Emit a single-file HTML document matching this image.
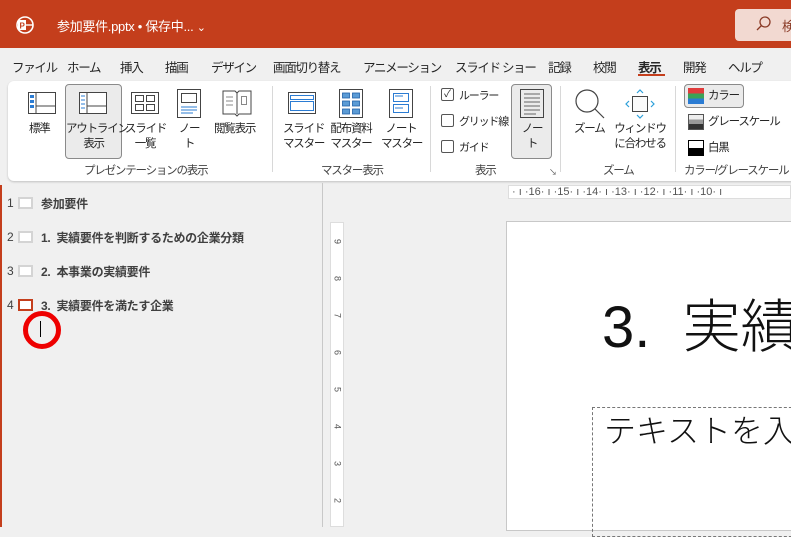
<!DOCTYPE html>
<html><head><meta charset="utf-8">
<style>
*{margin:0;padding:0;box-sizing:border-box}
body{width:791px;height:527px;overflow:hidden;background:#f0f0f0;font-family:"Liberation Sans","Noto Sans CJK JP",sans-serif;color:#262626;position:relative}
.a{position:absolute;white-space:nowrap}
.title{left:0;top:0;width:791px;height:48px;background:#c43e1c}
.tab{top:57px;font-size:12.5px;color:#262626;letter-spacing:-1.3px}
.ribbon{left:8px;top:81px;width:800px;height:100px;background:#fff;border-radius:6px;box-shadow:0 1px 2px rgba(0,0,0,.2)}
.lbl{font-size:11.5px;text-align:center;line-height:15px;color:#262626;letter-spacing:-1.2px}
.glbl{font-size:11.5px;color:#444;top:162px;letter-spacing:-1.2px}
.sep{width:1px;background:#d8d8d8;top:86px;height:86px}
.ol{font-size:12px;font-weight:bold;color:#404040;letter-spacing:-0.3px}
.num{font-size:12px;color:#404040}
.thumb{width:15px;height:12px;background:#fff;border:2px solid #d4d4d4}
</style></head><body>
<div class="a title"></div>
<svg class="a" style="left:15px;top:15px" width="20" height="20" viewBox="0 0 20 20"><circle cx="10" cy="10" r="8" fill="none" stroke="#fff" stroke-width="1.6"/><rect x="3" y="5" width="8" height="10" fill="#fff"/><text x="4.5" y="13.5" font-size="8" font-weight="bold" fill="#c43e1c" font-family="Liberation Sans">P</text><line x1="11" y1="10" x2="18" y2="10" stroke="#fff" stroke-width="1.4"/></svg>
<div class="a" style="left:57px;top:16px;font-size:13px;color:#fff;letter-spacing:-0.3px">参加要件.pptx • 保存中... <span style="font-size:11px">&#8964;</span></div>
<div class="a" style="left:735px;top:9px;width:70px;height:32px;background:#f2d9d1;border-radius:4px"></div>
<svg class="a" style="left:754px;top:15px" width="18" height="18" viewBox="0 0 18 18"><circle cx="11" cy="7" r="5" fill="none" stroke="#8a3a26" stroke-width="1.3"/><line x1="7.5" y1="10.5" x2="3" y2="15" stroke="#8a3a26" stroke-width="1.3"/></svg>
<div class="a" style="left:782px;top:16px;font-size:13px;color:#8a3a26">検</div>

<div class="a tab" style="left:12px">ファイル</div>
<div class="a tab" style="left:67px">ホーム</div>
<div class="a tab" style="left:120px">挿入</div>
<div class="a tab" style="left:165px">描画</div>
<div class="a tab" style="left:211px">デザイン</div>
<div class="a tab" style="left:273px">画面切り替え</div>
<div class="a tab" style="left:363px">アニメーション</div>
<div class="a tab" style="left:455px">スライド ショー</div>
<div class="a tab" style="left:548px">記録</div>
<div class="a tab" style="left:593px">校閲</div>
<div class="a tab" style="left:638px;font-weight:bold">表示</div>
<div class="a" style="left:638px;top:74px;width:27px;height:2px;background:#c43e1c"></div>
<div class="a tab" style="left:683px">開発</div>
<div class="a tab" style="left:728px">ヘルプ</div>

<div class="a ribbon"></div>
<svg class="a" style="left:28px;top:92px" width="28" height="22"><rect x="0.5" y="0.5" width="27" height="21" fill="#fff" stroke="#444"/><line x1="8" y1="0" x2="8" y2="22" stroke="#444"/><line x1="8" y1="14" x2="28" y2="14" stroke="#444"/><rect x="2" y="3" width="4" height="3" fill="#2b7cd3"/><rect x="2" y="8" width="4" height="3" fill="#2b7cd3"/><rect x="2" y="13" width="4" height="3" fill="#2b7cd3"/></svg>
<div class="a lbl" style="left:29px;top:122px">標準</div>
<div class="a" style="left:65px;top:84px;width:57px;height:75px;background:#ebebeb;border:1px solid #8a8a8a;border-radius:4px"></div>
<svg class="a" style="left:79px;top:92px" width="28" height="22"><rect x="0.5" y="0.5" width="27" height="21" fill="#fff" stroke="#444"/><line x1="8" y1="0" x2="8" y2="22" stroke="#444"/><line x1="8" y1="14" x2="28" y2="14" stroke="#444"/><g stroke="#2b7cd3"><line x1="2" y1="4" x2="6" y2="4"/><line x1="2" y1="8" x2="6" y2="8"/><line x1="2" y1="12" x2="6" y2="12"/><line x1="2" y1="16" x2="6" y2="16"/></g></svg>
<div class="a lbl" style="left:66px;top:122px;width:55px">アウトライン<br>表示</div>
<svg class="a" style="left:131px;top:92px" width="28" height="22" fill="none" stroke="#444"><rect x="0.5" y="0.5" width="27" height="21"/><rect x="4.5" y="3.5" width="8" height="6"/><rect x="15.5" y="3.5" width="8" height="6"/><rect x="4.5" y="12.5" width="8" height="6"/><rect x="15.5" y="12.5" width="8" height="6"/></svg>
<div class="a lbl" style="left:125px;top:122px;width:40px">スライド<br>一覧</div>
<svg class="a" style="left:177px;top:89px" width="24" height="29" fill="none" stroke="#444"><rect x="0.5" y="0.5" width="23" height="28"/><rect x="4.5" y="4.5" width="15" height="9"/><g stroke="#2b7cd3"><line x1="4" y1="18" x2="20" y2="18"/><line x1="4" y1="21" x2="20" y2="21"/><line x1="4" y1="24" x2="16" y2="24"/></g></svg>
<div class="a lbl" style="left:172px;top:122px;width:34px">ノー<br>ト</div>
<svg class="a" style="left:222px;top:89px" width="30" height="28" fill="none" stroke="#444"><path d="M1 2h12l2 2 2-2h12v23H17l-2 2-2-2H1z"/><line x1="15" y1="4" x2="15" y2="25"/><g stroke="#888"><line x1="4" y1="8" x2="11" y2="8"/><line x1="4" y1="12" x2="11" y2="12"/><line x1="4" y1="16" x2="11" y2="16"/><rect x="19.5" y="7.5" width="5" height="8"/></g></svg>
<div class="a lbl" style="left:214px;top:122px">閲覧表示</div>
<div class="a glbl" style="left:84px">プレゼンテーションの表示</div>
<div class="a sep" style="left:272px"></div>
<svg class="a" style="left:288px;top:92px" width="28" height="22" fill="none" stroke="#444"><rect x="0.5" y="0.5" width="27" height="21"/><rect x="2.5" y="3.5" width="23" height="4" stroke="#2b7cd3"/><rect x="2.5" y="9.5" width="23" height="9" stroke="#2b7cd3"/></svg>
<div class="a lbl" style="left:283px;top:122px;width:40px">スライド<br>マスター</div>
<svg class="a" style="left:339px;top:89px" width="24" height="29"><rect x="0.5" y="0.5" width="23" height="28" fill="#fff" stroke="#444"/><g fill="#5b9bd5" stroke="#1e5fa8" stroke-width=".8"><rect x="3.5" y="4" width="7" height="5"/><rect x="13.5" y="4" width="7" height="5"/><rect x="3.5" y="12" width="7" height="5"/><rect x="13.5" y="12" width="7" height="5"/><rect x="3.5" y="20" width="7" height="5"/><rect x="13.5" y="20" width="7" height="5"/></g></svg>
<div class="a lbl" style="left:326px;top:122px;width:50px">配布資料<br>マスター</div>
<svg class="a" style="left:389px;top:89px" width="24" height="29" fill="none"><rect x="0.5" y="0.5" width="23" height="28" stroke="#444"/><g stroke="#2b7cd3"><rect x="4.5" y="4.5" width="15" height="8"/><line x1="6" y1="7" x2="14" y2="7"/><rect x="4.5" y="15.5" width="15" height="8"/><line x1="6" y1="19" x2="14" y2="19"/></g></svg>
<div class="a lbl" style="left:381px;top:122px;width:40px">ノート<br>マスター</div>
<div class="a glbl" style="left:321px">マスター表示</div>
<div class="a sep" style="left:430px"></div>
<div class="a" style="left:441px;top:88px;width:13px;height:13px;border:1px solid #555;border-radius:2px;font-size:10px;line-height:11px;text-align:center">✓</div>
<div class="a lbl" style="left:459px;top:89px;font-size:11px">ルーラー</div>
<div class="a" style="left:441px;top:114px;width:13px;height:13px;border:1px solid #555;border-radius:2px"></div>
<div class="a lbl" style="left:459px;top:115px;font-size:11px">グリッド線</div>
<div class="a" style="left:441px;top:140px;width:13px;height:13px;border:1px solid #555;border-radius:2px"></div>
<div class="a lbl" style="left:459px;top:141px;font-size:11px">ガイド</div>
<div class="a" style="left:511px;top:84px;width:41px;height:75px;background:#ebebeb;border:1px solid #8a8a8a;border-radius:4px"></div>
<svg class="a" style="left:520px;top:89px" width="24" height="29" fill="none" stroke="#444"><rect x="0.5" y="0.5" width="23" height="28"/><g stroke="#666"><line x1="4" y1="5" x2="20" y2="5"/><line x1="4" y1="9" x2="20" y2="9"/><line x1="4" y1="13" x2="20" y2="13"/><line x1="4" y1="17" x2="20" y2="17"/><line x1="4" y1="21" x2="20" y2="21"/><line x1="4" y1="25" x2="16" y2="25"/></g></svg>
<div class="a lbl" style="left:520px;top:122px;width:24px">ノー<br>ト</div>
<div class="a glbl" style="left:475px">表示</div>
<div class="a" style="left:549px;top:167px;font-size:8px;color:#555">↘</div>
<div class="a sep" style="left:560px"></div>
<svg class="a" style="left:574px;top:88px" width="32" height="32" fill="none" stroke="#444" stroke-width="1.2"><circle cx="13" cy="13" r="11"/><line x1="21" y1="21" x2="30" y2="30"/></svg>
<div class="a lbl" style="left:574px;top:122px">ズーム</div>
<svg class="a" style="left:625px;top:89px" width="30" height="30"><rect x="7.5" y="7.5" width="15" height="15" fill="#fafafa" stroke="#444"/><g fill="none" stroke="#2b9fd9" stroke-width="1.2"><path d="M12 4l3-3 3 3M12 26l3 3 3-3M4 12l-3 3 3 3M26 12l3 3-3 3"/></g></svg>
<div class="a lbl" style="left:613px;top:122px;width:54px">ウィンドウ<br>に合わせる</div>
<div class="a glbl" style="left:603px">ズーム</div>
<div class="a sep" style="left:675px"></div>
<div class="a" style="left:684px;top:84px;width:60px;height:24px;background:#ebebeb;border:1px solid #8a8a8a;border-radius:4px"></div>
<div class="a" style="left:688px;top:88px;width:16px;height:16px;background:linear-gradient(#e03c3c 0 33%,#3aa357 33% 66%,#2b7cd3 66%)"></div>
<div class="a lbl" style="left:708px;top:89px">カラー</div>
<div class="a" style="left:688px;top:114px;width:16px;height:16px;border:1px solid #555;background:linear-gradient(#eee 0 33%,#999 33% 66%,#333 66%)"></div>
<div class="a lbl" style="left:708px;top:115px">グレースケール</div>
<div class="a" style="left:688px;top:140px;width:16px;height:16px;border:1px solid #000;background:linear-gradient(#fff 0 50%,#000 50%)"></div>
<div class="a lbl" style="left:708px;top:141px">白黒</div>
<div class="a glbl" style="left:684px">カラー/グレースケール</div>

<div class="a" style="left:0;top:185px;width:2px;height:342px;background:#c43e1c"></div>
<div class="a" style="left:322px;top:183px;width:1px;height:344px;background:#c8c8c8"></div>
<div class="a num" style="left:7px;top:196px">1</div><div class="a thumb" style="left:18px;top:197px"></div><div class="a ol" style="left:41px;top:195px">参加要件</div>
<div class="a num" style="left:7px;top:230px">2</div><div class="a thumb" style="left:18px;top:231px"></div><div class="a ol" style="left:41px;top:229px">1.&nbsp; 実績要件を判断するための企業分類</div>
<div class="a num" style="left:7px;top:264px">3</div><div class="a thumb" style="left:18px;top:265px"></div><div class="a ol" style="left:41px;top:263px">2.&nbsp; 本事業の実績要件</div>
<div class="a num" style="left:7px;top:298px">4</div><div class="a thumb" style="left:18px;top:299px;border-color:#c43e1c"></div><div class="a ol" style="left:41px;top:297px">3.&nbsp; 実績要件を満たす企業</div>
<div class="a" style="left:23px;top:311px;width:38px;height:38px;border:5px solid #ee0000;border-radius:50%"></div>
<div class="a" style="left:40px;top:321px;width:1px;height:16px;background:#000"></div>

<div class="a" style="left:508px;top:185px;width:283px;height:14px;background:#fff;border:1px solid #ddd;font-size:11px;color:#555;line-height:12px;overflow:hidden">&nbsp;· ı ·16· ı ·15· ı ·14· ı ·13· ı ·12· ı ·11· ı ·10· ı</div>
<div class="a" style="left:330px;top:222px;width:14px;height:305px;background:#fff;border:1px solid #ddd"></div>
<div class="a" style="left:331px;top:223px;width:12px;font-size:9px;color:#555;line-height:37px;text-align:center">
<div style="transform:rotate(90deg)">9</div><div style="transform:rotate(90deg)">8</div><div style="transform:rotate(90deg)">7</div><div style="transform:rotate(90deg)">6</div><div style="transform:rotate(90deg)">5</div><div style="transform:rotate(90deg)">4</div><div style="transform:rotate(90deg)">3</div><div style="transform:rotate(90deg)">2</div></div>

<div class="a" style="left:506px;top:221px;width:290px;height:310px;background:#fff;border:1px solid #c8c8c8"></div>
<div class="a" style="left:602px;top:280px;font-size:58px;font-weight:300;color:#111">3.&nbsp;&nbsp;実績</div>
<div class="a" style="left:592px;top:407px;width:210px;height:130px;border:1px dashed #777"></div>
<div class="a" style="left:604px;top:406px;font-size:32px;color:#111;font-weight:300">テキストを入</div>
</body></html>
